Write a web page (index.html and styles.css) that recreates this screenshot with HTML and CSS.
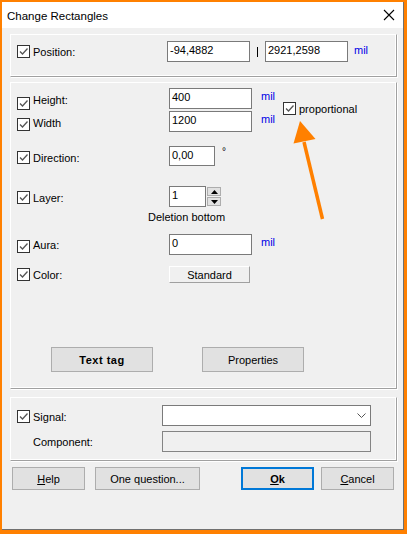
FILE: index.html
```html
<!DOCTYPE html>
<html>
<head>
<meta charset="utf-8">
<link rel="stylesheet" href="styles.css">
</head>
<body>
<div class="win">
  <div class="titlebar">
    <span class="title">Change Rectangles</span>
    <svg class="close" width="12" height="12" viewBox="0 0 12 12"><path d="M1 1 L11 11 M11 1 L1 11" stroke="#000" stroke-width="1.1" fill="none"/></svg>
  </div>
  <div class="content">
    <div class="group g1">
      <div class="row">
        <div class="chk w150 off4"><span class="cb"><svg viewBox="0 0 11 11"><path d="M2 5.5 L4.5 8 L9.5 2.5" stroke="#555" stroke-width="1.3" fill="none"/></svg></span><span>Position:</span></div>
        <div class="input w83">-94,4882</div>
        <div class="sep"><span class="bar"></span></div>
        <div class="input w83">2921,2598</div>
        <span class="unit u1">mil</span>
      </div>
    </div>

    <div class="group g2">
      <div class="row">
        <div class="chk w152 off9"><span class="cb"><svg viewBox="0 0 11 11"><path d="M2 5.5 L4.5 8 L9.5 2.5" stroke="#555" stroke-width="1.3" fill="none"/></svg></span><span class="lift4">Height:</span></div>
        <div class="input w83">400</div>
        <span class="unit u2">mil</span>
        <div class="chk prop"><span class="cb"><svg viewBox="0 0 11 11"><path d="M2 5.5 L4.5 8 L9.5 2.5" stroke="#555" stroke-width="1.3" fill="none"/></svg></span><span>proportional</span></div>
      </div>
      <div class="row mt2">
        <div class="chk w152 off7"><span class="cb"><svg viewBox="0 0 11 11"><path d="M2 5.5 L4.5 8 L9.5 2.5" stroke="#555" stroke-width="1.3" fill="none"/></svg></span><span class="lift2">Width</span></div>
        <div class="input w83">1200</div>
        <span class="unit u2">mil</span>
      </div>
      <div class="row mt14">
        <div class="chk w152 off5"><span class="cb"><svg viewBox="0 0 11 11"><path d="M2 5.5 L4.5 8 L9.5 2.5" stroke="#555" stroke-width="1.3" fill="none"/></svg></span><span>Direction:</span></div>
        <div class="input w46 h20">0,00</div>
        <span class="deg">°</span>
      </div>
      <div class="row mt19">
        <div class="chk w152 off5"><span class="cb"><svg viewBox="0 0 11 11"><path d="M2 5.5 L4.5 8 L9.5 2.5" stroke="#555" stroke-width="1.3" fill="none"/></svg></span><span>Layer:</span></div>
        <div class="input w37">1</div>
        <div class="spin">
          <span class="sbtn"><svg width="7" height="4" viewBox="0 0 7 4"><path d="M0 4 L3.5 0 L7 4 Z" fill="#000"/></svg></span>
          <span class="sbtn"><svg width="7" height="4" viewBox="0 0 7 4"><path d="M0 0 L3.5 4 L7 0 Z" fill="#000"/></svg></span>
        </div>
      </div>
      <div class="note">Deletion bottom</div>
      <div class="row mt10">
        <div class="chk w152 off6"><span class="cb"><svg viewBox="0 0 11 11"><path d="M2 5.5 L4.5 8 L9.5 2.5" stroke="#555" stroke-width="1.3" fill="none"/></svg></span><span class="lift2">Aura:</span></div>
        <div class="input w83">0</div>
        <span class="unit u2">mil</span>
      </div>
      <div class="row mt11 h17">
        <div class="chk w152 off2"><span class="cb"><svg viewBox="0 0 11 11"><path d="M2 5.5 L4.5 8 L9.5 2.5" stroke="#555" stroke-width="1.3" fill="none"/></svg></span><span>Color:</span></div>
        <div class="flatbtn">Standard</div>
      </div>
      <div class="row btns2">
        <div class="btn big bold">Text tag</div>
        <div class="btn big">Properties</div>
      </div>
    </div>

    <div class="group g3">
      <div class="row">
        <div class="chk w145 off5"><span class="cb"><svg viewBox="0 0 11 11"><path d="M2 5.5 L4.5 8 L9.5 2.5" stroke="#555" stroke-width="1.3" fill="none"/></svg></span><span>Signal:</span></div>
        <div class="input w209 select"><svg class="chev" width="9" height="5" viewBox="0 0 9 5"><path d="M0.5 0.5 L4.5 4.5 L8.5 0.5" stroke="#555" stroke-width="1" fill="none"/></svg></div>
      </div>
      <div class="row mt5">
        <div class="chk w145 nocb off4"><span>Component:</span></div>
        <div class="input w209 disabled"></div>
      </div>
    </div>

    <div class="footer">
      <div class="btn fb w73"><span><u>H</u>elp</span></div>
      <div class="btn fb w105 ml10">One question...</div>
      <div class="btn fb w73 ml41 ok bold"><span><u>O</u>k</span></div>
      <div class="btn fb w73 ml7"><span><u>C</u>ancel</span></div>
    </div>
  </div>
  <svg class="arrow" width="407" height="534" viewBox="0 0 407 534">
    <path d="M304 142 L322.5 219" stroke="#ff8000" stroke-width="3.5" fill="none"/>
    <path d="M300 121 L293.5 143.5 L315.5 139 Z" fill="#ff8000"/>
  </svg>
</div>
</body>
</html>
```
FILE: styles.css
```css
html, body {
  margin: 0;
  padding: 0;
  background: #ff8000;
  width: 407px;
  height: 534px;
  overflow: hidden;
}
body {
  font-family: "Liberation Sans", Arial, sans-serif;
  font-size: 11px;
  color: #000;
}
.win {
  position: relative;
  margin: 2px 0 0 2px;
  width: 401px;
  height: 527px;
  border-right: 1px solid #707070;
  border-bottom: 1px solid #707070;
  background: #f0f0f0;
  display: flex;
  flex-direction: column;
}
.titlebar {
  height: 26px;
  background: #fff;
  display: flex;
  align-items: center;
  justify-content: space-between;
  padding: 1px 8px 0 5px;
  box-sizing: border-box;
  flex: none;
}
.title {
  font-size: 11.5px;
}
.close {
  display: block;
  margin-top: -1px;
}
.content {
  padding: 6px 0 0 8px;
  display: flex;
  flex-direction: column;
}
.group {
  width: 387px;
  box-sizing: border-box;
  border-top: 1px solid #fff;
  border-left: 1px solid #fff;
  border-right: 1px solid #a0a0a0;
  border-bottom: 1px solid #a0a0a0;
  box-shadow: inset -1px -1px 0 #fff, 1px 1px 0 #fff;
}
.g1 { padding: 6px 6px 14px 6px; }
.g2 { margin-top: 5px; padding: 5px 6px 16px 6px; }
.g3 { margin-top: 8px; padding: 7px 6px 8px 6px; }
.row {
  display: flex;
  align-items: flex-start;
  height: 21px;
  flex: none;
}
.row.h17 { height: 17px; }
.row.btns2 { height: 25px; }
.mt2 { margin-top: 2px; }
.mt5 { margin-top: 5px; }
.mt10 { margin-top: 10px; }
.mt11 { margin-top: 11px; }
.mt14 { margin-top: 14px; }
.mt19 { margin-top: 19px; }
.chk {
  display: flex;
  align-items: center;
  gap: 3px;
  height: 13px;
  flex: none;
  white-space: nowrap;
}
.w145 { width: 145px; }
.w150 { width: 150px; }
.w152 { width: 152px; }
.off2 { margin-top: 2px; }
.off4 { margin-top: 4px; }
.off5 { margin-top: 5px; }
.off6 { margin-top: 6px; }
.off7 { margin-top: 7px; }
.off9 { margin-top: 9px; }
.lift4 { margin-bottom: 8px; }
.lift2 { margin-bottom: 3px; }
.nocb { padding-left: 16px; box-sizing: border-box; }
.cb {
  width: 13px;
  height: 13px;
  box-sizing: border-box;
  border: 1px solid #333;
  background: #fff;
  flex: none;
  display: block;
}
.cb svg {
  display: block;
  width: 11px;
  height: 11px;
}
.input {
  height: 21px;
  box-sizing: border-box;
  border: 1px solid #7a7a7a;
  background: #fff;
  line-height: 17px;
  padding: 0 2px;
  flex: none;
  white-space: nowrap;
}
.h20 { height: 20px; }
.w37 { width: 37px; }
.w46 { width: 46px; }
.w83 { width: 83px; }
.w209 { width: 209px; }
.sep {
  width: 15px;
  height: 21px;
  display: flex;
  align-items: center;
  justify-content: center;
  flex: none;
}
.bar {
  display: block;
  width: 1px;
  height: 10px;
  background: #000;
}
.unit {
  color: #0000e6;
  line-height: 15px;
  flex: none;
}
.u1 { margin-left: 6px; margin-top: 2px; }
.u2 { margin-left: 9px; margin-top: 1px; width: 22px; }
.prop {
  margin-top: 14px;
}
.deg {
  margin-left: 7px;
  line-height: 12px;
  font-size: 10px;
}
.spin {
  margin-left: 1px;
  margin-top: 1px;
  display: flex;
  flex-direction: column;
  gap: 1px;
}
.sbtn {
  width: 14px;
  height: 9px;
  box-sizing: border-box;
  border: 1px solid #adadad;
  background: #e1e1e1;
  display: flex;
  align-items: center;
  justify-content: center;
}
.sbtn svg { display: block; }
.note {
  margin-top: 3px;
  padding-left: 131px;
  line-height: 14px;
  height: 14px;
  white-space: nowrap;
}
.flatbtn {
  width: 81px;
  height: 17px;
  box-sizing: border-box;
  border-top: 1px solid #fff;
  border-left: 1px solid #fff;
  border-right: 1px solid #a0a0a0;
  border-bottom: 1px solid #a0a0a0;
  background: #f0f0f0;
  display: flex;
  align-items: center;
  justify-content: center;
}
.btns2 {
  margin-top: 64px;
  padding-left: 34px;
  gap: 49px;
}
.btn {
  box-sizing: border-box;
  border: 1px solid #adadad;
  background: #e1e1e1;
  display: flex;
  align-items: center;
  justify-content: center;
  white-space: nowrap;
  flex: none;
}
.big {
  width: 102px;
  height: 25px;
}
.bold { font-weight: bold; }
.big.bold { letter-spacing: 0.5px; }
.footer {
  display: flex;
  margin-top: 6px;
  padding-left: 2px;
}
.fb { height: 23px; }
.w73 { width: 73px; }
.w105 { width: 105px; }
.ml7 { margin-left: 7px; }
.ml10 { margin-left: 10px; }
.ml41 { margin-left: 41px; }
.ok {
  border: 2px solid #0078d7;
}
.select {
  display: flex;
  align-items: center;
  justify-content: flex-end;
  padding-right: 4px;
}
.chev { display: block; }
.disabled {
  background: #f0f0f0;
  border-color: #848484;
}
.arrow {
  position: absolute;
  left: -2px;
  top: -2px;
  pointer-events: none;
}
```
